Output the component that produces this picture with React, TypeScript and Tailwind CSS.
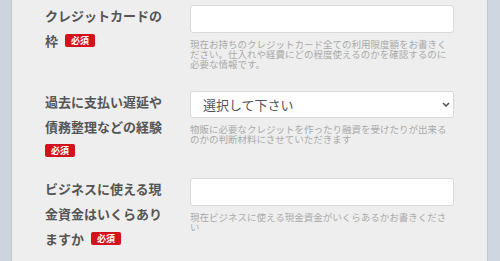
import React from "react";

type Field = {
  lines: string[];
  help: string;
  kind: "input" | "select";
  rowClass: string;
  badgeOwnLine?: boolean;
};

const fields: Field[] = [
  {
    lines: ["クレジットカードの", "枠"],
    help: "現在お持ちのクレジットカード全ての利用限度額をお書きください。仕入れや経費にどの程度使えるのかを確認するのに必要な情報です。",
    kind: "input",
    rowClass: "h-[86px]",
  },
  {
    lines: ["過去に支払い遅延や", "債務整理などの経験"],
    help: "物販に必要なクレジットを作ったり融資を受けたりが出来るのかの判断材料にさせていただきます",
    kind: "select",
    rowClass: "h-[87px]",
    badgeOwnLine: true,
  },
  {
    lines: ["ビジネスに使える現", "金資金はいくらあり", "ますか"],
    help: "現在ビジネスに使える現金資金がいくらあるかお書きください",
    kind: "input",
    rowClass: "h-[90px]",
  },
];

const Required: React.FC = () => (
  <span className="inline-block bg-[#d3131c] text-white text-[9px] font-bold leading-[13px] px-[6px] rounded-[2px]">
    必須
  </span>
);

const FormRow: React.FC<{ field: Field }> = ({ field }) => {
  const last = field.lines.length - 1;
  return (
    <div className={`flex gap-[25px] ${field.rowClass}`}>
      <div className="w-[120px] text-[13px] font-bold leading-[25px] text-[#555555]">
        {field.lines.map((line, i) => (
          <div key={i} className="flex items-center gap-[7px] h-[25px]">
            <span>{line}</span>
            {i === last && !field.badgeOwnLine && <Required />}
          </div>
        ))}
        {field.badgeOwnLine && (
          <div className="flex items-center h-[23px]">
            <Required />
          </div>
        )}
      </div>
      <div className="w-[264px] mt-[2px]">
        {field.kind === "input" ? (
          <input
            type="text"
            className="block w-full h-[28px] bg-white border border-[#d9d9d9] rounded-[3px] outline-none"
          />
        ) : (
          <div className="relative">
            <select className="block w-full h-[27px] appearance-none bg-white border border-[#d9d9d9] rounded-[3px] pl-[12px] text-[13px] text-[#555555] outline-none">
              <option>選択して下さい</option>
            </select>
            <svg
              className="absolute right-[4px] top-[11px] pointer-events-none"
              width="8"
              height="5"
              viewBox="0 0 8 5"
            >
              <path d="M1 1 L4 4 L7 1" fill="none" stroke="#555" strokeWidth="1.6" />
            </svg>
          </div>
        )}
        <p className="mt-[6px] text-[9.5px] leading-[10px] text-[#aaaaaa]">{field.help}</p>
      </div>
    </div>
  );
};

const App: React.FC = () => {
  return (
    <div
      className="flex w-[500px] h-[261px] overflow-hidden"
      style={{ fontFamily: '"Noto Sans CJK JP", "Noto Sans", sans-serif' }}
    >
      <div className="w-[12px] bg-[#cdd4dd] border-r border-[#bfc6d0]" />
      <div className="flex-1 bg-[#eeeeee] pl-[33px] pt-[3px]">
        {fields.map((f) => (
          <FormRow key={f.help} field={f} />
        ))}
      </div>
      <div className="w-[13px] bg-[#cfd6e0] border-l border-[#c2c9d3]" />
    </div>
  );
};

export default App;
